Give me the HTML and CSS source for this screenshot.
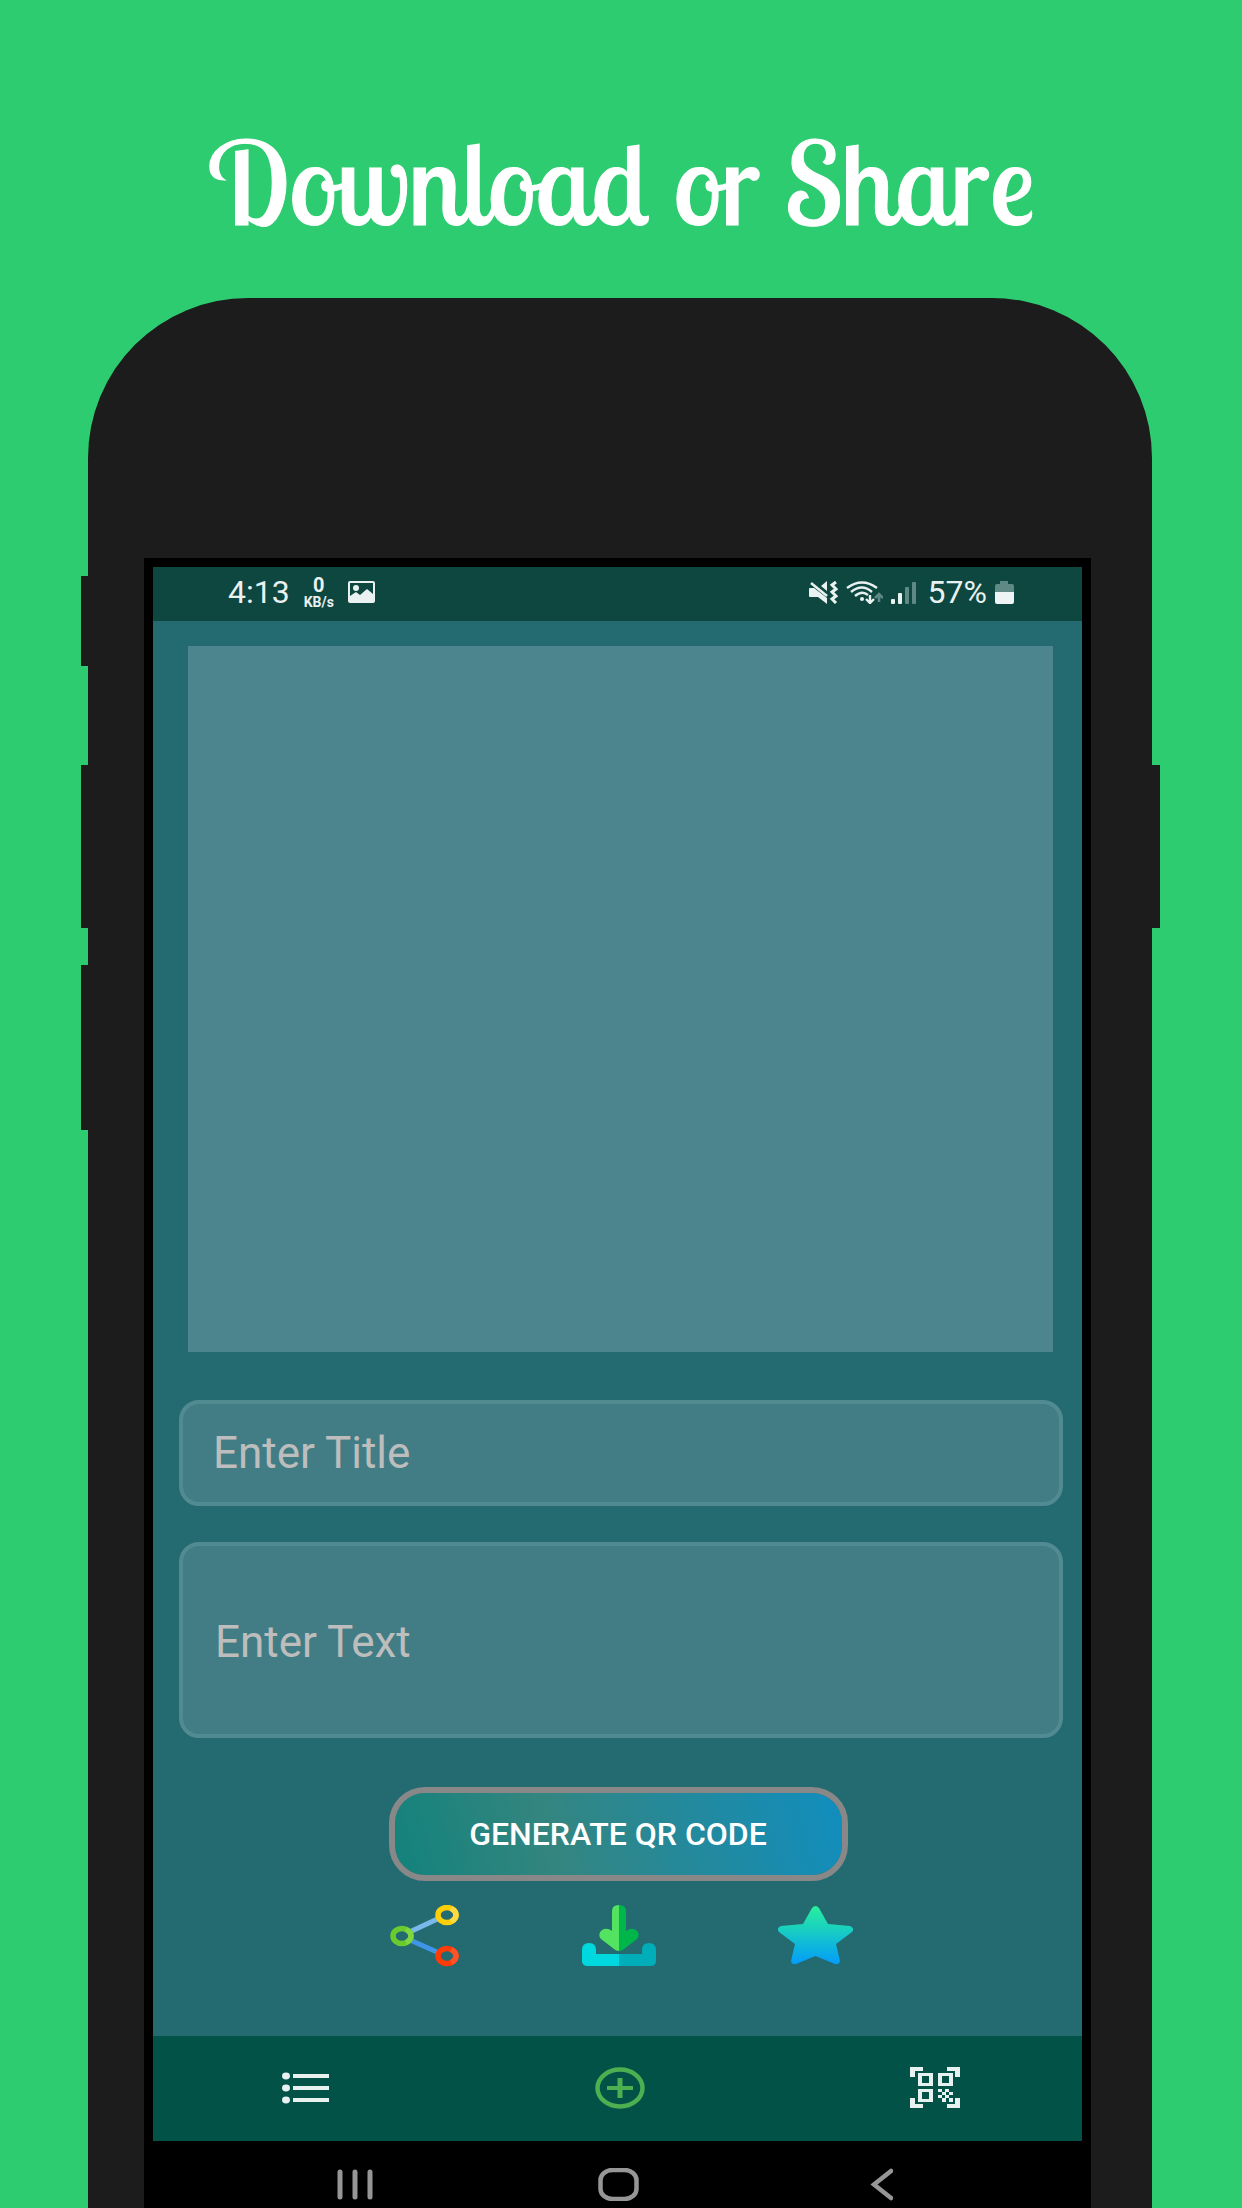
FILE: index.html
```html
<!DOCTYPE html>
<html lang="en">
<head>
<meta charset="utf-8">
<meta name="viewport" content="width=device-width, initial-scale=1">
<title>Download or Share</title>
<link rel="stylesheet" href="styles.css">
</head>
<body>
<main class="promo">
  <h1 class="headline">Download or Share</h1>
  <div class="phone">
    <div class="rail">
      <span class="key key-short"></span>
      <span class="key"></span>
      <span class="key key-last"></span>
    </div>
    <div class="shell">
      <div class="screen">
        <header class="status">
          <div class="status-group">
            <span class="clock">4:13</span>
            <span class="speed"><b class="speed-value">0</b><b class="speed-unit">KB/s</b></span>
            <svg class="status-picture" width="27" height="22" viewBox="0 0 27 22"><path fill="#eaf1f1" fill-rule="evenodd" d="M2 0H25Q27 0 27 2V20Q27 22 25 22H2Q0 22 0 20V2Q0 0 2 0ZM2 2V15L8 11L12 14L19 8L25 13V2Z"/><circle cx="8" cy="7" r="3" fill="#eaf1f1"/></svg>
          </div>
          <div class="status-group">
            <svg width="29" height="23" viewBox="0 0 29 23"><path fill="#eaf1f1" d="M1 7H5L18 17V23L9 16H1Q0 16 0 15V8Q0 7 1 7ZM12 5L18 0V10Z"/><path d="M2 2L18 15" stroke="#eaf1f1" stroke-width="2.5"/><path d="M27 1L23 4L27 8L23 11L27 15L23 18L27 22" fill="none" stroke="#eaf1f1" stroke-width="3"/></svg>
            <svg width="37" height="23" viewBox="0 0 37 23"><g fill="none" stroke="#eaf1f1" stroke-width="2.4"><path d="M1 7Q16 -4 31 7"/><path d="M5 11Q16 2 26 11"/><path d="M9 15Q16 9 22 14"/><path d="M24 14V21M20 18L24 22L28 18"/></g><circle cx="16" cy="18" r="2" fill="#eaf1f1"/><path d="M33 21V14M29 17L33 13L37 17" fill="none" stroke="#5f8985" stroke-width="2.6"/></svg>
            <svg width="25" height="23" viewBox="0 0 25 23"><g fill="#eaf1f1"><rect y="18" width="4" height="5" rx="1"/><rect x="7" y="12" width="4" height="11" rx="1"/></g><g fill="#5f8985"><rect x="14" y="6" width="4" height="17" rx="1"/><rect x="21" y="1" width="4" height="22" rx="1"/></g></svg>
            <span class="charge">57%</span>
            <svg width="19" height="23" viewBox="0 0 19 23"><path fill="#5f8985" d="M5 0H13V3H17Q19 3 19 5V12H0V5Q0 3 2 3H5Z"/><path fill="#eef3f3" d="M0 11H19V21Q19 23 17 23H2Q0 23 0 21Z"/></svg>
          </div>
        </header>

        <form class="form">
          <div class="preview"></div>
          <input class="field" type="text" placeholder="Enter Title" aria-label="Title">
          <textarea class="field field-tall" placeholder="Enter Text" aria-label="Text"></textarea>
          <button class="generate" type="button">GENERATE QR CODE</button>
          <div class="actions">
            <button class="action" type="button" aria-label="Share">
              <svg width="71" height="62" viewBox="0 0 71 62"><path d="M12 31L57 10" stroke="#7ab8ec" stroke-width="5"/><path d="M12 31L57 51" stroke="#3f96e6" stroke-width="5"/><g fill="#246a71" stroke-width="5.5"><ellipse cx="13" cy="31" rx="9" ry="7.500" stroke="#6bcb2e"/><ellipse cx="58" cy="10" rx="9" ry="7.500" stroke="#ffcf05"/><ellipse cx="58" cy="51" rx="9" ry="7.500" stroke="#ff3c06"/></g><g fill="none" stroke-width="5.500"><path d="M17 24.300Q22 27 22 31T17 37.700" stroke="#7fd63e"/><path d="M62 3.300Q67 6 67 10T62 16.700" stroke="#ffda44"/><path d="M62 44.300Q67 47 67 51T62 57.700" stroke="#ff5226"/></g></svg>
            </button>
            <button class="action" type="button" aria-label="Download">
              <svg width="74" height="62" viewBox="0 0 74 62"><path fill="#00d8e0" d="M37 49H14V45Q14 38 7 38Q0 38 0 45V56Q0 61 6 61H37Z"/><path fill="#00adb8" d="M37 49H60V45Q60 38 67 38Q74 38 74 45V56Q74 61 68 61H37Z"/><path fill="#54e360" d="M37 0Q30 0 30 6V26Q25 22 20 25Q15 29 19 34L32 44Q34 46 37 46Z"/><path fill="#00b54a" d="M37 0Q44 0 44 6V26Q49 22 54 25Q59 29 55 34L42 44Q40 46 37 46Z"/></svg>
            </button>
            <button class="action" type="button" aria-label="Favourite">
              <svg width="75" height="62" viewBox="0 0 75 62"><defs><linearGradient id="sky" x1="0" y1="0" x2="0" y2="1"><stop offset="0" stop-color="#27f19b"/><stop offset="1" stop-color="#039cfa"/></linearGradient></defs><path fill="url(#sky)" d="M34 3Q37.500 -1 41 3L50 19L72 21Q77 23 74 27L58 39L62 56Q61 60 57 59L37.500 51L18 59Q14 60 13 56L17 39L1 27Q-2 23 3 21L25 19Z"/></svg>
            </button>
          </div>
        </form>

        <nav class="tabs">
          <a class="tab" href="#list" aria-label="List"><svg width="47" height="42" viewBox="0 0 47 42"><g fill="#e6f1f0"><ellipse cx="4" cy="9" rx="4" ry="3.400"/><ellipse cx="4" cy="21" rx="4" ry="3.400"/><ellipse cx="4" cy="33" rx="4" ry="3.400"/><path d="M11 7H47V11H11ZM11 19H47V23H11ZM11 31H47V35H11Z"/></g></svg></a>
          <a class="tab" href="#create" aria-label="Create"><svg width="50" height="42" viewBox="0 0 50 42"><g fill="none" stroke="#4caf50"><ellipse cx="25" cy="21" rx="22.500" ry="18.500" stroke-width="4.500"/><path d="M12 21H38" stroke-width="4"/><path d="M25 11V31" stroke-width="5"/></g></svg></a>
          <a class="tab" href="#scan" aria-label="Scan"><svg width="50" height="42" viewBox="0 0 50 42"><path fill="#e6f1f0" fill-rule="evenodd" d="M0 0H13V4H5V10H0ZM50 0H37V4H45V10H50ZM0 41H13V37H5V31H0ZM50 41H37V37H45V31H50ZM8 6H23V19H8ZM12 9V16H19V9ZM28 6H43V19H28ZM32 9V16H39V9ZM8 22H23V35H8ZM12 25V32H19V25Z"/><path fill="#e6f1f0" d="M28 22h4v3h-4zM35 22h4v3h-4zM32 25h4v3h-4zM39 25h4v3h-4zM28 28h4v3h-4zM35 28h4v3h-4zM32 31h4v4h-4zM39 31h4v4h-4z"/></svg></a>
        </nav>

        <div class="system">
          <button class="action" type="button" aria-label="Recent apps"><svg width="36" height="33" viewBox="0 0 36 33"><path d="M3 4V29M18 4V29M33 4V29" stroke="#969696" stroke-width="5" stroke-linecap="round"/></svg></button>
          <button class="action" type="button" aria-label="Home"><svg width="41" height="33" viewBox="0 0 41 33"><rect x="2.500" y="2" width="36" height="29" rx="12" ry="10" fill="none" stroke="#969696" stroke-width="4.500"/></svg></button>
          <button class="action" type="button" aria-label="Back"><svg width="30" height="33" viewBox="0 0 30 33"><path d="M28 3L11 16.500L28 30" fill="none" stroke="#969696" stroke-width="4.500" stroke-linecap="round"/></svg></button>
        </div>
      </div>
    </div>
    <div class="rail rail-right">
      <span class="key"></span>
    </div>
  </div>
</main>
</body>
</html>
```
FILE: styles.css
```css
* {
  box-sizing: border-box;
}

body {
  margin: 0;
  background: #2ecc71;
  font-family: Roboto, "Liberation Sans", sans-serif;
}

svg {
  display: block;
}

.promo {
  display: flex;
  flex-direction: column;
  min-height: 100vh;
}

.headline {
  margin: 0;
  padding-top: 110px;
  height: 298px;
  color: #fff;
  font-family: "Lobster Two", Lobster, Lato, sans-serif;
  font-size: 115px;
  font-weight: 400;
  line-height: 144px;
  text-align: center;
  -webkit-text-stroke: 1px #fff;
}

/* Handset */
.phone {
  display: flex;
  flex: 1;
  padding: 0 82px 0 81px;
}

.rail {
  display: flex;
  flex-direction: column;
  width: 7px;
  padding-top: 278px;
}

.rail-right {
  width: 8px;
  padding-top: 467px;
}

.key {
  height: 163px;
  background: #1c1c1c;
}

.key-short {
  height: 90px;
  margin-bottom: 99px;
}

.key-last {
  height: 165px;
  margin-top: 37px;
}

.shell {
  display: flex;
  flex: 1;
  min-width: 0;
  padding: 260px 61px 0 56px;
  border-radius: 160px 160px 0 0;
  background: #1c1c1c;
}

.screen {
  display: flex;
  flex: 1;
  flex-direction: column;
  min-width: 0;
  border: 9px solid #000;
  border-bottom: 0;
  background: #246a71;
}

/* Status bar */
.status {
  display: flex;
  align-items: center;
  justify-content: space-between;
  height: 54px;
  padding: 0 68px 4px 75px;
  background: #0d4740;
  color: #eaf1f1;
  font-size: 32px;
  line-height: 36px;
}

.status-group {
  display: flex;
  align-items: center;
  gap: 8px;
}

.speed {
  display: flex;
  flex-direction: column;
  align-items: center;
  margin-left: 6px;
}

.speed-value {
  font-size: 20px;
  line-height: 20px;
}

.speed-unit {
  font-size: 14px;
  line-height: 14px;
}

.status-picture {
  margin-left: 6px;
}

.charge {
  margin-left: 4px;
}

/* Form */
.form {
  display: flex;
  flex-direction: column;
  flex: 1;
  padding: 25px 19px 69px 26px;
}

.preview {
  aspect-ratio: 865 / 706;
  margin: 0 10px 48px 9px;
  background: #4c858d;
}

.field {
  width: 100%;
  height: 106px;
  margin: 0 0 36px;
  padding: 0 30px;
  border: 4px solid #518a91;
  border-radius: 20px;
  outline: 0;
  background: #427d85;
  color: #fff;
  font: 44px/48px Roboto, "Liberation Sans", sans-serif;
  resize: none;
}

.field::placeholder {
  color: #bdbdbd;
  opacity: 1;
}

.field-tall {
  height: 196px;
  margin-bottom: 49px;
  padding: 72px 32px 64px;
}

.generate {
  align-self: center;
  width: 459px;
  height: 94px;
  margin: 0 6px 24px 0;
  padding: 0;
  border: 6px solid #888;
  border-radius: 36px;
  background: linear-gradient(75deg, #13827c, #34857f 35%, #118ebe) padding-box;
  color: #fff;
  font: 500 32px/36px Roboto, "Liberation Sans", sans-serif;
}

.actions {
  display: flex;
  align-self: center;
  justify-content: space-between;
  width: 464px;
}

.action {
  padding: 0;
  border: 0;
  background: none;
}

/* Bottom bars */
.tabs {
  display: flex;
  align-items: center;
  justify-content: space-between;
  height: 105px;
  padding: 0 122px 2px 129px;
  background: #025248;
}

.system {
  display: flex;
  justify-content: space-between;
  padding: 27px 189px 8px 184px;
  background: #000;
}
```
